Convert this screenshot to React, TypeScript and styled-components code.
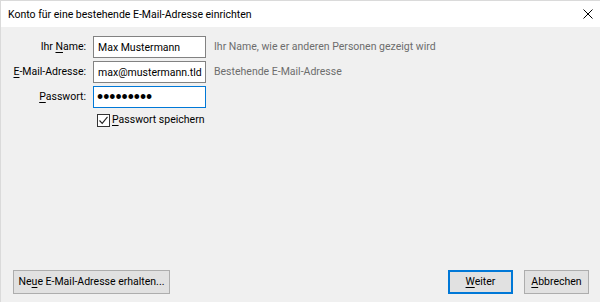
import React from "react";
import styled, { createGlobalStyle } from "styled-components";

const Global = createGlobalStyle`
  html, body { margin: 0; padding: 0; background: #f0f0f0; }
  body { font-family: Roboto, "Noto Sans", sans-serif; font-size: 10.5px; color: #000; }
  #root { width: 600px; height: 302px; }
  * { box-sizing: border-box; }
`;

const Window = styled.div`
  width: 600px;
  height: 302px;
  display: flex;
  flex-direction: column;
  background: #f0f0f0;
  border-left: 1px solid #dadada;
  border-top: 1px solid #dadada;
  overflow: hidden;
`;

const TitleBar = styled.div`
  height: 26px;
  flex: none;
  background: #ffffff;
  display: flex;
  align-items: center;
  justify-content: space-between;
  padding: 1px 7px 0 7px;
`;

const Title = styled.span`
  font-size: 10.5px;
  line-height: 16px;
  color: #000;
`;

const CloseButton = styled.div`
  width: 10px;
  height: 10px;
  display: flex;
  margin-top: -2px;
`;

const Body = styled.div`
  flex: 1;
  display: flex;
  flex-direction: column;
  padding: 9px 11px 8px 0;
`;

const Form = styled.div`
  display: grid;
  grid-template-columns: 85px 113px 1fr;
  grid-auto-rows: 22px;
  column-gap: 7px;
  row-gap: 3px;
  align-items: center;
`;

const Label = styled.label`
  text-align: right;
  white-space: nowrap;
  line-height: 16px;
`;

const Key = styled.span`
  text-decoration: underline;
  text-underline-offset: 2px;
  text-decoration-thickness: 1px;
`;

const Field = styled.input<{ $focused?: boolean }>`
  width: 113px;
  height: 22px;
  margin: 0;
  border: 1px solid ${(p) => (p.$focused ? "#0078d7" : "#828282")};
  background: #fff;
  padding: 0 3px 0 4px;
  font-family: inherit;
  font-size: 10.5px;
  color: #000;
  outline: none;
  &[type="password"] {
    font-family: "Liberation Sans", sans-serif;
    font-size: 17.5px;
    padding-left: 3px;
  }
`;

const Hint = styled.span`
  color: #6d6d6d;
  white-space: nowrap;
  margin-left: 1px;
  line-height: 16px;
`;

const CheckRow = styled.div`
  grid-column: 2 / 4;
  align-self: start;
  display: flex;
  align-items: center;
  gap: 2px;
  padding-left: 4px;
  margin-top: 2px;
  line-height: 14px;
`;

const CheckBox = styled.span`
  width: 13px;
  height: 13px;
  border: 1px solid #333333;
  background: #fff;
  display: flex;
  align-items: center;
  justify-content: center;
`;

const Footer = styled.div`
  margin-top: auto;
  display: flex;
  align-items: center;
  gap: 11px;
  padding-left: 12px;
`;

const Spacer = styled.div`
  flex: 1;
`;

const Button = styled.button<{ $primary?: boolean; $w: number }>`
  width: ${(p) => p.$w}px;
  height: 24px;
  margin: 0;
  padding: 0;
  white-space: nowrap;
  background: #e1e1e1;
  border: ${(p) => (p.$primary ? "2px solid #0078d7" : "1px solid #adadad")};
  font-family: inherit;
  font-size: 10.5px;
  color: #000;
  line-height: 16px;
`;

export default function App() {
  return (
    <>
      <Global />
      <Window>
        <TitleBar>
          <Title>Konto für eine bestehende E-Mail-Adresse einrichten</Title>
          <CloseButton>
            <svg width="10" height="10" viewBox="0 0 10 10">
              <path d="M0.5 0.5 L9.5 9.5 M9.5 0.5 L0.5 9.5" stroke="#000" strokeWidth="1" fill="none" />
            </svg>
          </CloseButton>
        </TitleBar>
        <Body>
          <Form>
            <Label>
              Ihr <Key>N</Key>ame:
            </Label>
            <Field defaultValue="Max Mustermann" />
            <Hint>Ihr Name, wie er anderen Personen gezeigt wird</Hint>

            <Label>
              <Key>E</Key>-Mail-Adresse:
            </Label>
            <Field defaultValue="max@mustermann.tld" />
            <Hint>Bestehende E-Mail-Adresse</Hint>

            <Label>
              <Key>P</Key>asswort:
            </Label>
            <Field type="password" defaultValue="123456789" $focused />
            <span />

            <CheckRow>
              <CheckBox>
                <svg width="11" height="11" viewBox="0 0 11 11">
                  <path d="M1.5 5.5 L4.2 8.3 L9.5 1.8" stroke="#222" strokeWidth="1.1" fill="none" />
                </svg>
              </CheckBox>
              <span>
                <Key>P</Key>asswort speichern
              </span>
            </CheckRow>
          </Form>
          <Footer>
            <Button $w={157}>
              Ne<Key>u</Key>e E-Mail-Adresse erhalten...
            </Button>
            <Spacer />
            <Button $w={65} $primary>
              <Key>W</Key>eiter
            </Button>
            <Button $w={65}>
              <Key>A</Key>bbrechen
            </Button>
          </Footer>
        </Body>
      </Window>
    </>
  );
}
